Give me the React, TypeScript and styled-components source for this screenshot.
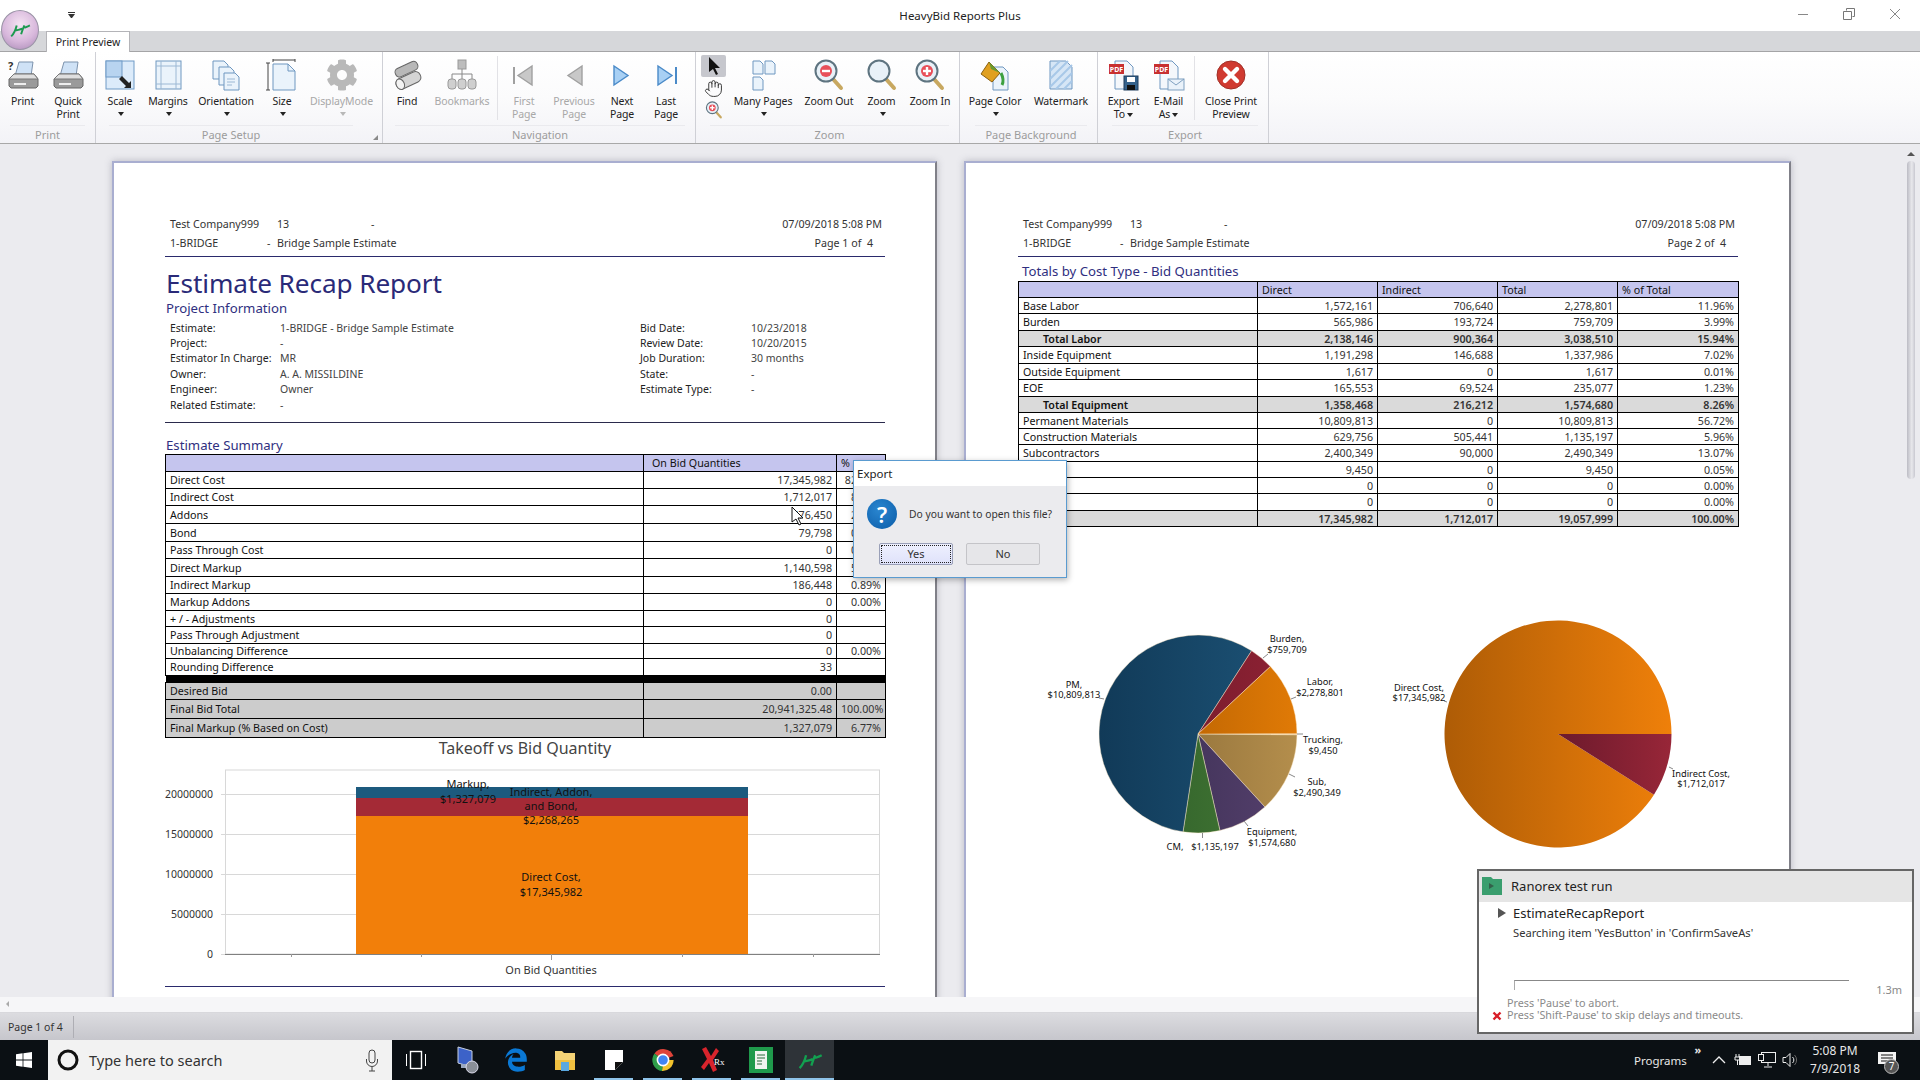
import React, { FC, ReactNode } from "react"
import styled, { createGlobalStyle } from "styled-components"
import { FaCog, FaEdgeLegacy } from "react-icons/fa"
import { Hand } from "lucide-react"

const UI_FONT = `"Noto Sans", "Open Sans", sans-serif`

const GlobalStyle = createGlobalStyle`
  html, body {
    margin: 0;
    padding: 0;
    overflow: hidden;
    background: #ebebef;
    font-family: ${UI_FONT};
  }
`

const Screen = styled.div`
  position: relative;
  width: 1920px;
  height: 1080px;
  overflow: hidden;
  display: flex;
  flex-direction: column;
  color: #222;
`

/* ---------- title bar and tab strip ---------- */

const TitleBar = styled.div`
  height: 31px;
  flex: none;
  background: #fff;
  display: flex;
  align-items: center;
  justify-content: center;
  font-size: 11.5px;
  position: relative;
`

const Orb = styled.div`
  position: absolute;
  z-index: 3;
  left: 1px;
  top: 10px;
  width: 36px;
  height: 38px;
  border-radius: 50%;
  background: radial-gradient(circle at 50% 35%, #f4e3f2 0%, #d8b8dc 55%, #a888b4 100%);
  border: 1px solid #9a93a6;
  display: flex;
  align-items: center;
  justify-content: center;
`

const QatArrow = styled.div`
  position: absolute;
  left: 68px;
  top: 12px;
  width: 7px;
  border-top: 1px solid #333;
  &::after {
    content: "";
    display: block;
    margin-top: 1px;
    border-left: 3.5px solid transparent;
    border-right: 3.5px solid transparent;
    border-top: 4px solid #333;
  }
`

const WindowButtons = styled.div`
  position: absolute;
  right: 2px;
  top: 0;
  height: 28px;
  display: flex;
  align-items: center;
`

const WindowButton = styled.div`
  width: 46px;
  display: flex;
  justify-content: center;
  color: #777;
`

const TabStrip = styled.div`
  height: 21px;
  flex: none;
  background: #d6d7da;
  border-bottom: 1px solid #a4a4a6;
  box-sizing: border-box;
  padding-left: 46px;
`

const Tab = styled.div`
  width: 84px;
  height: 21px;
  box-sizing: border-box;
  background: #fff;
  border: 1px solid #b4b4b8;
  border-bottom: none;
  font-size: 10.5px;
  line-height: 21px;
  text-align: center;
`

/* ---------- ribbon ---------- */

const Ribbon = styled.div`
  height: 92px;
  flex: none;
  display: flex;
  box-sizing: border-box;
  border-bottom: 1px solid #a8a8a8;
  background: linear-gradient(#fff 0%, #fbfbfc 50%, #f3f3f7 100%);
`

const Group = styled.div<{ $w: number; $pad?: number }>`
  width: ${(p) => p.$w}px;
  flex: none;
  box-sizing: border-box;
  padding-left: ${(p) => p.$pad || 0}px;
  border-right: 1px solid #cfd0d6;
  display: flex;
  flex-direction: column;
  position: relative;
`

const GroupBody = styled.div`
  height: 74px;
  display: flex;
`

const GroupCaption = styled.div<{ $launcher?: boolean }>`
  font-size: 11px;
  line-height: 17px;
  text-align: center;
  color: #9c9c9c;
  margin: 0 ${(p) => (p.$launcher ? 29 : 10)}px 0 10px;
  border-top: 1px solid #eaeaee;
`

const Launcher = styled.div`
  position: absolute;
  right: 4px;
  bottom: 3px;
  width: 0;
  height: 0;
  border-left: 5px solid transparent;
  border-bottom: 5px solid #8a8a8a;
`

const ToolButton = styled.div<{ $w: number; $off?: boolean }>`
  width: ${(p) => p.$w}px;
  flex: none;
  display: flex;
  flex-direction: column;
  align-items: center;
  color: ${(p) => (p.$off ? "#a8a8a8" : "#222")};
`

const IconSlot = styled.div`
  height: 43px;
  padding-top: 3px;
  box-sizing: border-box;
  display: flex;
  align-items: center;
  justify-content: center;
`

const ToolLabel = styled.div`
  font-size: 10.5px;
  line-height: 13px;
  letter-spacing: -0.1px;
  text-align: center;
  white-space: pre-line;
`

const Caret = styled.span<{ $off?: boolean }>`
  display: inline-block;
  width: 0;
  height: 0;
  margin: 0 0 1px 2px;
  border-left: 3.5px solid transparent;
  border-right: 3.5px solid transparent;
  border-top: 4px solid ${(p) => (p.$off ? "#b8b8b8" : "#222")};
`

const CaretLine = styled.div`
  height: 13px;
  display: flex;
  align-items: center;
  justify-content: center;
`

const ToolSeparator = styled.div`
  width: 1px;
  height: 64px;
  margin: 4px 2px 0;
  background: #e2e2e6;
`

const SmallColumn = styled.div`
  width: 29px;
  flex: none;
  display: flex;
  flex-direction: column;
  padding: 3px 3px 0 1px;
  box-sizing: border-box;
`

const SmallTool = styled.div<{ $on?: boolean }>`
  height: 22px;
  display: flex;
  align-items: center;
  justify-content: center;
  border-radius: 2px;
  background: ${(p) => (p.$on ? "#c6c7cd" : "transparent")};
`

/* ---------- document area ---------- */

const DocArea = styled.div`
  height: 853px;
  flex: none;
  box-sizing: border-box;
  padding: 17px 0 0 112px;
  display: flex;
  gap: 27px;
  align-items: flex-start;
  overflow: hidden;
  position: relative;
  background: #ebebef;
`

const Sheet = styled.div<{ $pad: number; $w: number }>`
  width: ${(p) => p.$w}px;
  height: 900px;
  flex: none;
  box-sizing: border-box;
  padding: 51px 0 0 ${(p) => p.$pad}px;
  background: #fff;
  border: 2px solid #a9aed0;
  border-right-color: #808088;
  box-shadow: 0 0 7px rgba(90, 90, 110, 0.35);
`

const SheetInner = styled.div`
  width: 720px;
`

const SheetHeader = styled.div<{ $inset: number }>`
  padding: 0 3px 4px ${(p) => p.$inset}px;
  border-bottom: 1px solid #2a2a6c;
  font-size: 10.7px;
  color: #333;
`

const SheetRow = styled.div`
  height: 19px;
  display: flex;
  align-items: center;
`

const SheetCell = styled.div<{ $w: number }>`
  width: ${(p) => p.$w}px;
  flex: none;
  white-space: nowrap;
`

const SheetRight = styled.div<{ $gap?: number }>`
  margin-left: auto;
  padding-right: ${(p) => p.$gap || 0}px;
  white-space: pre;
`

const ReportTitle = styled.h1`
  margin: 10px 0 0 1px;
  font-size: 26.2px;
  line-height: 33px;
  font-weight: 400;
  color: #2a2a78;
  letter-spacing: -0.1px;
`

const SectionTitle = styled.h2<{ $top?: number; $after?: number; $left?: number }>`
  margin: ${(p) => p.$top || 0}px 0 ${(p) => p.$after || 0}px ${(p) => p.$left ?? 1}px;
  font-size: 13.2px;
  line-height: 16px;
  font-weight: 400;
  color: #2f2f80;
`

const InfoGrid = styled.div`
  display: grid;
  grid-template-columns: 110px 360px 111px 1fr;
  grid-auto-rows: 15.4px;
  padding: 4px 0 0 5px;
  height: 107px;
  box-sizing: border-box;
  font-size: 10.5px;
  align-items: center;
  border-bottom: 1px solid #2a2a4c;
  color: #222;
`

const InfoValue = styled.span`
  color: #444;
  white-space: nowrap;
`

const ReportTable = styled.table`
  width: 720px;
  table-layout: fixed;
  border-collapse: collapse;
  font-size: 10.7px;
  color: #1c1c1c;
`

const HeadRow = styled.tr<{ $h: number }>`
  height: ${(p) => p.$h}px;
  background: #c5c5ee;
`

const BodyRow = styled.tr<{ $h: number; $shade?: string; $bold?: boolean }>`
  height: ${(p) => p.$h}px;
  background: ${(p) => p.$shade || "#fff"};
  font-weight: ${(p) => (p.$bold ? 600 : 400)};
`

const Cell = styled.td<{ $num?: boolean; $indent?: boolean; $lead?: number }>`
  border: 1px solid #000;
  padding: 0 ${(p) => (p.$num ? "4px" : "0")} 0 ${(p) => (p.$lead ?? (p.$indent ? 24 : 4))}px;
  text-align: ${(p) => (p.$num ? "right" : "left")};
  white-space: nowrap;
  overflow: hidden;
  line-height: 12px;
  color: ${(p) => (p.$num ? "#333" : "#111")};
`

const ThickRow = styled.tr`
  height: 7px;
  background: #000;
`

const ChartTitle = styled.div`
  height: 21px;
  line-height: 21px;
  text-align: center;
  font-size: 16px;
  color: #444;
`

const ChartSvg = styled.svg<{ $top?: number }>`
  display: block;
  overflow: visible;
  margin-top: ${(p) => p.$top || 0}px;
  font-family: ${UI_FONT};
`

const FooterRule = styled.div`
  height: 1px;
  margin-top: 5px;
  background: #2a2a6c;
`

const VScroll = styled.div`
  position: absolute;
  right: 5px;
  top: 8px;
  width: 8px;
`

const ScrollArrow = styled.div`
  width: 0;
  height: 0;
  margin: 0 0 5px 0;
  border-left: 4px solid transparent;
  border-right: 4px solid transparent;
  border-bottom: 4px solid #555;
`

const ScrollThumb = styled.div`
  height: 318px;
  border-radius: 4px;
  background: linear-gradient(90deg, #bcbcc4, #e8e8ec 60%, #c8c8d0);
`

const HScrollBand = styled.div`
  height: 16px;
  flex: none;
  box-sizing: border-box;
  padding: 4px 0 0 6px;
  background: #f6f6f8;
  border-bottom: 1px solid #d8d8dc;
`

const HArrow = styled.div`
  width: 0;
  height: 0;
  border-top: 3px solid transparent;
  border-bottom: 3px solid transparent;
  border-right: 3px solid #aaa;
`

const StatusBar = styled.div`
  height: 27px;
  flex: none;
  background: linear-gradient(#dcdce0, #c6c6cc);
  display: flex;
  align-items: center;
  font-size: 10.5px;
  color: #333;
`

const StatusPane = styled.div`
  width: 65px;
  padding-left: 8px;
  line-height: 22px;
  border-right: 1px solid #aeaeb4;
`

/* ---------- taskbar ---------- */

const TaskBar = styled.div`
  height: 40px;
  flex: none;
  background: #0b1014;
  display: flex;
  align-items: stretch;
  color: #fff;
`

const StartButton = styled.div`
  width: 48px;
  display: flex;
  align-items: center;
  justify-content: center;
`

const SearchBox = styled.div`
  width: 344px;
  box-sizing: border-box;
  background: #f2f2f2;
  display: flex;
  align-items: center;
  padding: 0 13px 0 9px;
  gap: 10px;
  color: #333;
  font-size: 14.5px;
`

const SearchText = styled.span`
  flex: 1;
`

const TaskIcon = styled.div<{ $running?: boolean; $active?: boolean; $lead?: number }>`
  width: 49px;
  flex: none;
  position: relative;
  margin-left: ${(p) => p.$lead || 0}px;
  display: flex;
  align-items: center;
  justify-content: center;
  background: ${(p) => (p.$active ? "#2e3338" : "transparent")};
  &::after {
    content: "";
    display: ${(p) => (p.$running || p.$active ? "block" : "none")};
    position: absolute;
    left: ${(p) => (p.$active ? 0 : 5)}px;
    right: ${(p) => (p.$active ? 0 : 5)}px;
    bottom: 0;
    height: 2px;
    background: #8fc4ea;
  }
`

const Tray = styled.div`
  margin-left: auto;
  display: flex;
  align-items: stretch;
  padding-right: 15px;
  font-size: 12px;
  color: #e8e8e8;
`

const TrayLabel = styled.div`
  width: 55px;
  padding-left: 5px;
  display: flex;
  align-items: center;
  font-size: 11.5px;
`

const TrayChevrons = styled.div`
  width: 18px;
  padding-top: 3px;
  font-size: 11px;
  font-weight: 700;
  line-height: 14px;
  text-align: center;
`

const TrayIcon = styled.div<{ $w?: number }>`
  width: ${(p) => p.$w || 23}px;
  display: flex;
  align-items: center;
  justify-content: center;
`

const Clock = styled.div`
  width: 68px;
  display: flex;
  flex-direction: column;
  justify-content: center;
  align-items: center;
  line-height: 18px;
`

const Notify = styled.div`
  width: 36px;
  position: relative;
  display: flex;
  align-items: center;
  justify-content: center;
`

const NotifyBadge = styled.span`
  position: absolute;
  right: 6px;
  bottom: 6px;
  width: 15px;
  height: 15px;
  border-radius: 50%;
  background: #555;
  border: 1px solid #bbb;
  box-sizing: border-box;
  font-size: 10px;
  line-height: 13px;
  text-align: center;
  color: #fff;
`

/* ---------- overlays ---------- */

const Dialog = styled.div`
  position: absolute;
  z-index: 5;
  left: 853px;
  top: 460px;
  width: 214px;
  height: 118px;
  box-sizing: border-box;
  border: 1px solid #5a9bd0;
  background: #ebebee;
  box-shadow: 1px 2px 6px rgba(0, 0, 0, 0.3);
  font-size: 10.3px;
  color: #333;
`

const DialogHead = styled.div`
  height: 25px;
  background: #fff;
  font-size: 11.5px;
  line-height: 25px;
  padding-left: 3px;
  color: #222;
`

const DialogBody = styled.div`
  display: flex;
  align-items: center;
  gap: 12px;
  padding: 13px 0 0 13px;
`

const QuestionMark = styled.div`
  width: 30px;
  height: 30px;
  flex: none;
  border-radius: 50%;
  background: radial-gradient(circle at 40% 35%, #2a86d0, #0b5ca8);
  color: #fff;
  font-size: 22px;
  font-weight: 600;
  line-height: 30px;
  text-align: center;
`

const DialogActions = styled.div`
  display: flex;
  gap: 13px;
  padding: 14px 0 0 25px;
`

const DialogButton = styled.div<{ $focus?: boolean }>`
  width: 74px;
  height: 22px;
  box-sizing: border-box;
  border: 1px solid ${(p) => (p.$focus ? "#9aa0b8" : "#c4c4c8")};
  border-radius: 2px;
  background: ${(p) => (p.$focus ? "linear-gradient(#eef0fe, #dfe2fa)" : "#e6e6e9")};
  outline: ${(p) => (p.$focus ? "1px dotted #222" : "none")};
  outline-offset: -3px;
  text-align: center;
  line-height: 20px;
  font-size: 11px;
`

const Toast = styled.div`
  position: absolute;
  z-index: 6;
  left: 1477px;
  top: 869px;
  width: 437px;
  height: 165px;
  box-sizing: border-box;
  border: 2px solid #666;
  background: #fff;
  color: #222;
`

const ToastHead = styled.div`
  height: 29px;
  padding: 0 0 2px 3px;
  background: #e5e5e5;
  display: flex;
  align-items: center;
  gap: 9px;
  font-size: 13px;
`

const ToastBody = styled.div`
  padding: 1px 0 0 19px;
`

const ToastJob = styled.div`
  display: flex;
  align-items: center;
  gap: 7px;
  font-size: 13px;
  line-height: 20px;
`

const PlayMark = styled.span`
  width: 0;
  height: 0;
  border-top: 5px solid transparent;
  border-bottom: 5px solid transparent;
  border-left: 8px solid #555;
`

const ToastStep = styled.div`
  font-size: 11.2px;
  line-height: 20px;
  padding-left: 15px;
  color: #333;
`

const ToastProgress = styled.div`
  display: flex;
  align-items: flex-start;
  margin-top: 37px;
  padding: 0 10px 0 35px;
  color: #888;
  font-size: 11px;
`

const ProgressTrack = styled.div`
  width: 334px;
  height: 9px;
  border-top: 1px solid #888;
  border-left: 1px solid #aaa;
`

const ProgressTime = styled.span`
  margin: 0 0 0 auto;
  line-height: 12px;
  padding-top: 4px;
`

const ToastHint = styled.div`
  display: flex;
  align-items: flex-end;
  gap: 5px;
  margin-top: 1px;
  padding-left: 13px;
  font-size: 10.8px;
  line-height: 12px;
  color: #8a8a8a;
`

const MouseCursor = styled.svg`
  position: absolute;
  z-index: 4;
  left: 791px;
  top: 506px;
`

/* ---------- icons ---------- */

const Svg: FC<{ w?: number; h?: number; children: ReactNode }> = ({ w = 32, h = 32, children }) => (
  <svg width={w} height={h} viewBox={`0 0 ${w} ${h}`}>{children}</svg>
)

const PAGE = "#eaf3fb"
const EDGE = "#6f97c0"

const PrinterIcon: FC<{ help?: boolean }> = ({ help }) => (
  <Svg>
    <polygon points="12,3 26,3 24,17 8,17" fill="#cfe2f6" stroke="#7d93ad" />
    <path d="M7 15h20l4 5v7l-2 2H4l-2-2v-7z" fill="#9a9a9a" stroke="#666" />
    <path d="M7 15h20l4 5H2z" fill="#dfdfdf" stroke="#777" />
    <rect x="7" y="24" width="12" height="2" fill="#eee" />
    {help && <text x="1" y="11" fontSize="11" fontWeight="700" fill="#333">?</text>}
  </Svg>
)

const ScaleIcon = () => (
  <Svg>
    <rect x="2" y="2" width="28" height="28" fill="#dcebfa" stroke="#6f9ac6" />
    <rect x="2" y="2" width="16" height="16" fill="#b8d4f0" stroke="#6f9ac6" />
    <path d="M18 17l7 7 2-2v7h-7l2-2-7-7z" fill="#222" />
  </Svg>
)

const MarginsIcon = () => (
  <Svg>
    <rect x="4" y="2" width="25" height="28" fill={PAGE} stroke={EDGE} />
    <path d="M9 2v28M24 2v28M4 7h25M4 25h25" stroke="#9cb8d4" fill="none" />
  </Svg>
)

const OrientationIcon = () => (
  <Svg>
    <path d="M3 2h11l4 4v14H3z" fill={PAGE} stroke={EDGE} />
    <path d="M9 8h11l4 4v14H9z" fill={PAGE} stroke={EDGE} />
    <path d="M14 14h11l4 4v13H14z" fill={PAGE} stroke={EDGE} />
    <path d="M17 20h8M17 23h8M17 26h5" stroke="#9cb8d4" />
  </Svg>
)

const SizeIcon = () => (
  <Svg>
    <path d="M7 1h22M7 0v3M29 0v3M2 4v27M0 4h4M0 31h4" stroke="#444" fill="none" />
    <path d="M7 5h15l7 7v19H7z" fill={PAGE} stroke={EDGE} />
    <path d="M22 5v7h7" fill="none" stroke={EDGE} />
  </Svg>
)

const BinocularIcon = () => (
  <Svg h={30}>
    <g transform="rotate(-25 16 15)">
      <rect x="6" y="5" width="24" height="9" rx="4" fill="#b8b8b8" stroke="#666" />
      <rect x="2" y="15" width="26" height="11" rx="5" fill="#d4d4d4" stroke="#666" />
      <ellipse cx="6" cy="20.5" rx="4" ry="5.5" fill="#f3f3f3" stroke="#666" />
    </g>
  </Svg>
)

const BookmarksIcon = () => (
  <Svg>
    <rect x="12" y="1" width="8" height="9" fill="#bdbdbd" stroke="#999" />
    <path d="M16 10v5M6 20v-5h20v5M16 15v5" stroke="#888" fill="none" />
    {[2, 12, 22].map((x) => <rect key={x} x={x} y="20" width="8" height="10" rx="3" fill="#cfcfcf" stroke="#999" />)}
  </Svg>
)

const NavIcon: FC<{ dir: "first" | "prev" | "next" | "last" }> = ({ dir }) => {
  const back = dir === "first" || dir === "prev"
  const tri = back ? "M24 7v19L10 16.5z" : "M8 7v19l14-9.5z"
  const fill = back ? "#c8c8c8" : "#a8d0f4"
  const line = back ? "#a0a0a0" : "#4a8ac8"
  return (
    <Svg>
      <path d={tri} fill={fill} stroke={line} strokeWidth="1.4" />
      {dir === "first" && <path d="M6 8v17" stroke={line} strokeWidth="2" />}
      {dir === "last" && <path d="M26 8v17" stroke={line} strokeWidth="2" />}
    </Svg>
  )
}

const ManyPagesIcon = () => (
  <Svg>
    {[[6, 2], [18, 2], [6, 18]].map(([x, y]) => (
      <path key={`${x}${y}`} d={`M${x} ${y}h7l3 3v10h-10z`} fill={PAGE} stroke={EDGE} />
    ))}
  </Svg>
)

const LensIcon: FC<{ mark?: "in" | "out"; size?: number }> = ({ mark, size = 32 }) => (
  <svg width={size} height={size} viewBox="0 0 32 32">
    <path d="M20 20l8 9" stroke="#c8a860" strokeWidth="4" strokeLinecap="round" />
    <circle cx="13" cy="12" r="10.5" fill="#e8f1f8" stroke="#5e7480" strokeWidth="2" />
    {mark && <circle cx="13" cy="12" r="6" fill="#e8505a" />}
    {mark && <path d="M9 12h8" stroke="#fff" strokeWidth="2.4" />}
    {mark === "in" && <path d="M13 8v8" stroke="#fff" strokeWidth="2.4" />}
  </svg>
)

const PageColorIcon = () => (
  <Svg>
    <path d="M14 8h10l5 5v18H14z" fill={PAGE} stroke={EDGE} />
    <path d="M10 3l11 11-8 9L2 15z" fill="#e0a020" stroke="#8a6010" />
    <path d="M10 3l11 11L12 10z" fill="#6a9a30" />
    <path d="M22 14c2 4 3 8 1 12" stroke="#3ca040" strokeWidth="3" fill="none" />
  </Svg>
)

const WatermarkIcon = () => (
  <Svg>
    <path d="M5 2h16l6 6v22H5z" fill="#d6e6f6" stroke={EDGE} />
    <path d="M5 12L15 2M5 20L23 2M5 28L27 6M11 30L27 14M19 30l8-8" stroke="#a8c8e8" strokeWidth="2" />
  </Svg>
)

const PdfPage: FC = () => (
  <>
    <path d="M7 2h12l6 6v22H7z" fill="#f4f7fb" stroke={EDGE} />
    <rect x="1" y="5" width="15" height="10" fill="#c83030" />
    <text x="8.5" y="13" fontSize="7" fontWeight="700" fill="#fff" textAnchor="middle" fontFamily={UI_FONT}>PDF</text>
  </>
)

const ExportIcon = () => (
  <Svg>
    <PdfPage />
    <rect x="16" y="17" width="14" height="14" fill="#35628c" stroke="#1e3c5c" />
    <rect x="19" y="18" width="8" height="5" fill="#fff" />
    <rect x="19" y="26" width="8" height="5" fill="#111" />
  </Svg>
)

const MailIcon = () => (
  <Svg>
    <PdfPage />
    <rect x="15" y="20" width="16" height="11" fill="#eaf2fa" stroke="#7fa0c0" />
    <path d="M15 20l8 6 8-6" stroke="#7fa0c0" fill="none" />
  </Svg>
)

const CloseIcon = () => (
  <Svg>
    <circle cx="16" cy="16" r="14" fill="#d03a30" stroke="#a03028" />
    <path d="M10 10l12 12M22 10L10 22" stroke="#fff" strokeWidth="4.4" strokeLinecap="round" />
  </Svg>
)

const ArrowTool = () => (
  <svg width="14" height="20" viewBox="0 0 14 20">
    <path d="M2 1v15l4-3 3 6 2-1-3-6h5z" fill="#111" />
  </svg>
)

const HeavyMark: FC<{ size: number; color: string }> = ({ size, color }) => (
  <svg width={size} height={size * 0.8} viewBox="0 0 20 16">
    <path d="M2 14c3-3 4-6 5-10M5 9c3-1 5-1 7-2M11 12c1-3 2-6 3-8M14 6c1 0 3-1 5-2" stroke={color} strokeWidth="1.8" fill="none" />
  </svg>
)

/* ---------- data ---------- */

interface ITool {
  label: string,
  w: number,
  icon: ReactNode,
  off?: boolean,
  drop?: boolean,
  inlineDrop?: boolean,
}

interface IGroup {
  title: string,
  w: number,
  pad?: number,
  launcher?: boolean,
  tools: (ITool | "sep" | "small")[],
}

const GROUPS: IGroup[] = [
  { title: "Print", w: 96, tools: [
    { label: "Print", w: 45, icon: <PrinterIcon help /> },
    { label: "Quick\nPrint", w: 46, icon: <PrinterIcon /> },
  ] },
  { title: "Page Setup", w: 287, pad: 3, launcher: true, tools: [
    { label: "Scale", w: 42, icon: <ScaleIcon />, drop: true },
    { label: "Margins", w: 54, icon: <MarginsIcon />, drop: true },
    { label: "Orientation", w: 62, icon: <OrientationIcon />, drop: true },
    { label: "Size", w: 50, icon: <SizeIcon />, drop: true },
    { label: "DisplayMode", w: 69, off: true, drop: true, icon: <FaCog size={32} color="#b9b9b9" /> },
  ] },
  { title: "Navigation", w: 313, pad: 2, tools: [
    { label: "Find", w: 44, icon: <BinocularIcon /> },
    { label: "Bookmarks", w: 66, off: true, icon: <BookmarksIcon /> },
    "sep",
    { label: "First\nPage", w: 48, off: true, icon: <NavIcon dir="first" /> },
    { label: "Previous\nPage", w: 52, off: true, icon: <NavIcon dir="prev" /> },
    { label: "Next\nPage", w: 44, icon: <NavIcon dir="next" /> },
    { label: "Last\nPage", w: 44, icon: <NavIcon dir="last" /> },
  ] },
  { title: "Zoom", w: 264, pad: 4, tools: [
    "small",
    { label: "Many Pages", w: 68, drop: true, icon: <ManyPagesIcon /> },
    { label: "Zoom Out", w: 64, icon: <LensIcon mark="out" /> },
    { label: "Zoom", w: 41, drop: true, icon: <LensIcon /> },
    { label: "Zoom In", w: 56, icon: <LensIcon mark="in" /> },
  ] },
  { title: "Page Background", w: 138, pad: 5, tools: [
    { label: "Page Color", w: 60, drop: true, icon: <PageColorIcon /> },
    { label: "Watermark", w: 72, icon: <WatermarkIcon /> },
  ] },
  { title: "Export", w: 171, pad: 4, tools: [
    { label: "Export\nTo", w: 43, inlineDrop: true, icon: <ExportIcon /> },
    { label: "E-Mail\nAs", w: 47, inlineDrop: true, icon: <MailIcon /> },
    "sep",
    { label: "Close Print\nPreview", w: 68, icon: <CloseIcon /> },
  ] },
]

const INFO: [string, string, string, string][] = [
  ["Estimate:", "1-BRIDGE - Bridge Sample Estimate", "Bid Date:", "10/23/2018"],
  ["Project:", "-", "Review Date:", "10/20/2015"],
  ["Estimator In Charge:", "MR", "Job Duration:", "30 months"],
  ["Owner:", "A. A. MISSILDINE", "State:", "-"],
  ["Engineer:", "Owner", "Estimate Type:", "-"],
  ["Related Estimate:", "-", "", ""],
]

const SUMMARY: [string, string, string, number][] = [
  ["Direct Cost", "17,345,982", "82.83%", 17],
  ["Indirect Cost", "1,712,017", "8.18%", 17],
  ["Addons", "476,450", "2.28%", 18],
  ["Bond", "79,798", "0.38%", 18],
  ["Pass Through Cost", "0", "0.00%", 17],
  ["Direct Markup", "1,140,598", "5.45%", 18],
  ["Indirect Markup", "186,448", "0.89%", 17],
  ["Markup Addons", "0", "0.00%", 17],
  ["+ / - Adjustments", "0", "", 16],
  ["Pass Through Adjustment", "0", "", 17],
  ["Unbalancing Difference", "0", "0.00%", 15],
  ["Rounding Difference", "33", "", 17],
]

const SUMMARY_TOTALS: [string, string, string, number][] = [
  ["Desired Bid", "0.00", "", 17],
  ["Final Bid Total", "20,941,325.48", "100.00%", 19],
  ["Final Markup (% Based on Cost)", "1,327,079", "6.77%", 19],
]

const COST_ROWS: { name: string, vals: string[], total?: boolean, h: number }[] = [
  { name: "Base Labor", vals: ["1,572,161", "706,640", "2,278,801", "11.96%"], h: 16 },
  { name: "Burden", vals: ["565,986", "193,724", "759,709", "3.99%"], h: 17 },
  { name: "Total Labor", vals: ["2,138,146", "900,364", "3,038,510", "15.94%"], total: true, h: 16 },
  { name: "Inside Equipment", vals: ["1,191,298", "146,688", "1,337,986", "7.02%"], h: 17 },
  { name: "Outside Equipment", vals: ["1,617", "0", "1,617", "0.01%"], h: 16 },
  { name: "EOE", vals: ["165,553", "69,524", "235,077", "1.23%"], h: 17 },
  { name: "Total Equipment", vals: ["1,358,468", "216,212", "1,574,680", "8.26%"], total: true, h: 16 },
  { name: "Permanent Materials", vals: ["10,809,813", "0", "10,809,813", "56.72%"], h: 16 },
  { name: "Construction Materials", vals: ["629,756", "505,441", "1,135,197", "5.96%"], h: 16 },
  { name: "Subcontractors", vals: ["2,400,349", "90,000", "2,490,349", "13.07%"], h: 17 },
  { name: "Trucking", vals: ["9,450", "0", "9,450", "0.05%"], h: 16 },
  { name: "", vals: ["0", "0", "0", "0.00%"], h: 16 },
  { name: "", vals: ["0", "0", "0", "0.00%"], h: 17 },
  { name: "Totals", vals: ["17,345,982", "1,712,017", "19,057,999", "100.00%"], total: true, h: 16 },
]

/* ---------- report parts ---------- */

const ReportHeader: FC<{ page: number; inset: number }> = ({ page, inset }) => (
  <SheetHeader $inset={inset}>
    <SheetRow>
      <SheetCell $w={107}>Test Company999</SheetCell>
      <SheetCell $w={94}>13</SheetCell>
      <SheetCell $w={10}>-</SheetCell>
      <SheetRight>07/09/2018 5:08 PM</SheetRight>
    </SheetRow>
    <SheetRow>
      <SheetCell $w={97}>1-BRIDGE</SheetCell>
      <SheetCell $w={10}>-</SheetCell>
      <SheetCell $w={150}>Bridge Sample Estimate</SheetCell>
      <SheetRight $gap={9}>{`Page ${page} of  4`}</SheetRight>
    </SheetRow>
  </SheetHeader>
)

const BAR_TICKS = [0, 5000000, 10000000, 15000000, 20000000]

const BarChart = () => (
  <ChartSvg width="720" height="222" viewBox="0 0 720 222">
    <rect x="60.5" y="11" width="654" height="184" fill="#fff" stroke="#d8d8d8" />
    {BAR_TICKS.map((t, i) => {
      const y = 195 - i * 40
      return (
        <g key={t}>
          <path d={`M56 ${y}.5H714`} stroke="#d8d8d8" />
          <text x="48" y={y + 4} fontSize="10.5" fill="#333" textAnchor="end">{t}</text>
        </g>
      )
    })}
    <rect x="191" y="28" width="392" height="11" fill="#1c5a7e" />
    <rect x="191" y="39" width="392" height="18" fill="#a42a36" />
    <rect x="191" y="57" width="392" height="138" fill="#f27f0a" />
    <path d="M60 195.5H715" stroke="#808080" />
    {[126, 256, 386, 517, 648].map((x) => <path key={x} d={`M${x}.5 195v${x === 386 ? 6 : 3}`} stroke="#999" />)}
    <g fontSize="11" textAnchor="middle" fill="#111">
      <text x="303" y="29">Markup,</text>
      <text x="303" y="44">$1,327,079</text>
      <text x="386" y="37">Indirect, Addon,</text>
      <text x="386" y="51">and Bond,</text>
      <text x="386" y="65">$2,268,265</text>
      <text x="386" y="122">Direct Cost,</text>
      <text x="386" y="137">$17,345,982</text>
      <text x="386" y="215" fill="#333">On Bid Quantities</text>
    </g>
  </ChartSvg>
)

const polar = (cx: number, cy: number, r: number, deg: number) => {
  const a = (deg * Math.PI) / 180
  return [cx + r * Math.cos(a), cy + r * Math.sin(a)]
}

const slicePath = (cx: number, cy: number, r: number, from: number, to: number) => {
  const [x1, y1] = polar(cx, cy, r, from)
  const [x2, y2] = polar(cx, cy, r, to)
  return `M${cx} ${cy}L${x1} ${y1}A${r} ${r} 0 ${to - from > 180 ? 1 : 0} 1 ${x2} ${y2}Z`
}

const PIE_A = [
  { id: "tr", from: -0.2, to: 0.5, a: "#d09a50", b: "#e0b060" },
  { id: "su", from: 0.5, to: 47.5, a: "#826432", b: "#b48e4c" },
  { id: "eq", from: 47.5, to: 77.2, a: "#352c4c", b: "#56406e" },
  { id: "cm", from: 77.2, to: 98.7, a: "#2c5a28", b: "#467c36" },
  { id: "pm", from: 98.7, to: 302.8, a: "#113a58", b: "#1d5478" },
  { id: "bu", from: 302.8, to: 317, a: "#6a1828", b: "#8f2234" },
  { id: "la", from: 317, to: 359.8, a: "#a85800", b: "#e07a06" },
]

const PIE_B = [
  { id: "di", from: 32.3, to: 360, a: "#ae5c06", b: "#ef800a" },
  { id: "in", from: 0, to: 32.3, a: "#6c1a2c", b: "#982638" },
]

const LABELS: [number, number, string][] = [
  [269, 31, "Burden,"], [269, 42, "$759,709"],
  [302, 74, "Labor,"], [302, 85, "$2,278,801"],
  [56, 77, "PM,"], [56, 87, "$10,809,813"],
  [305, 132, "Trucking,"], [305, 143, "$9,450"],
  [299, 174, "Sub,"], [299, 185, "$2,490,349"],
  [254, 224, "Equipment,"], [254, 235, "$1,574,680"],
  [157, 239, "CM,"], [197, 239, "$1,135,197"],
  [401, 80, "Direct Cost,"], [401, 90, "$17,345,982"],
  [683, 166, "Indirect Cost,"], [683, 176, "$1,712,017"],
]

const LEADERS = [
  "M245 47l5-4", "M273 88l5-2", "M86 88l-5-1", "M279 123h6", "M271 163l6 3",
  "M226 210l4 5", "M184.5 222v5", "M426 90l3 1", "M651 156l4 2",
]

const PieCharts = () => (
  <ChartSvg width="720" height="250" viewBox="0 0 720 250" $top={84}>
    <defs>
      {PIE_A.map((s) => (
        <linearGradient key={s.id} id={s.id} gradientUnits="userSpaceOnUse" x1="81" x2="279" y1="0" y2="0">
          <stop offset="0" stopColor={s.a} />
          <stop offset="1" stopColor={s.b} />
        </linearGradient>
      ))}
      {PIE_B.map((s) => (
        <linearGradient key={s.id} id={s.id} gradientUnits="userSpaceOnUse" x1={s.id === "in" ? 540 : 427} x2="654" y1="0" y2="0">
          <stop offset="0" stopColor={s.a} />
          <stop offset="1" stopColor={s.b} />
        </linearGradient>
      ))}
    </defs>
    {PIE_A.map((s) => <path key={s.id} d={slicePath(180, 123, 99, s.from, s.to)} fill={`url(#${s.id})`} stroke="rgba(255,235,200,.55)" strokeWidth="0.8" />)}
    {PIE_B.map((s) => <path key={s.id} d={slicePath(540, 123, 113.5, s.from, s.to)} fill={`url(#${s.id})`} />)}
    {LEADERS.map((d) => <path key={d} d={d} stroke="#888" fill="none" />)}
    <g fontSize="9.3" textAnchor="middle" fill="#111">
      {LABELS.map(([x, y, t]) => <text key={t} x={x} y={y}>{t}</text>)}
    </g>
  </ChartSvg>
)

/* ---------- page ---------- */

const Tool: FC<{ tool: ITool }> = ({ tool }) => {
  const lines = tool.label.split("\n")
  return (
    <ToolButton $w={tool.w} $off={tool.off}>
      <IconSlot>{tool.icon}</IconSlot>
      {tool.inlineDrop ? (
        <ToolLabel>{lines[0]}{"\n"}{lines[1]}<Caret /></ToolLabel>
      ) : (
        <ToolLabel>{tool.label}</ToolLabel>
      )}
      {tool.drop && <CaretLine><Caret $off={tool.off} /></CaretLine>}
    </ToolButton>
  )
}

const App: FC = () => (
  <Screen>
    <GlobalStyle />
    <TitleBar>
      HeavyBid Reports Plus
      <QatArrow />
      <WindowButtons>
        <WindowButton>
          <svg width="12" height="12"><path d="M1 6.5h10" stroke="#888" /></svg>
        </WindowButton>
        <WindowButton>
          <svg width="12" height="12"><path d="M3.5 2.5V.5h8v8h-2M.5 3.5h8v8h-8z" stroke="#777" fill="none" /></svg>
        </WindowButton>
        <WindowButton>
          <svg width="12" height="12"><path d="M1 1l10 10M11 1L1 11" stroke="#888" /></svg>
        </WindowButton>
      </WindowButtons>
    </TitleBar>
    <Orb><HeavyMark size={22} color="#1e9a50" /></Orb>
    <TabStrip><Tab>Print Preview</Tab></TabStrip>

    <Ribbon>
      {GROUPS.map((g) => (
        <Group key={g.title} $w={g.w} $pad={g.pad}>
          <GroupBody>
            {g.tools.map((t, i) => {
              if (t === "sep") return <ToolSeparator key={i} />
              if (t === "small") {
                return (
                  <SmallColumn key={i}>
                    <SmallTool $on><ArrowTool /></SmallTool>
                    <SmallTool><Hand size={19} strokeWidth={1.2} color="#333" /></SmallTool>
                    <SmallTool><LensIcon size={18} mark="in" /></SmallTool>
                  </SmallColumn>
                )
              }
              return <Tool key={t.label} tool={t} />
            })}
          </GroupBody>
          <GroupCaption $launcher={g.launcher}>{g.title}</GroupCaption>
          {g.launcher && <Launcher />}
        </Group>
      ))}
    </Ribbon>

    <DocArea>
      <Sheet $pad={51} $w={825}>
        <SheetInner>
          <ReportHeader page={1} inset={5} />
          <ReportTitle>Estimate Recap Report</ReportTitle>
          <SectionTitle>Project Information</SectionTitle>
          <InfoGrid>
            {INFO.map((r) => (
              <React.Fragment key={r[0]}>
                <span>{r[0]}</span>
                <InfoValue>{r[1]}</InfoValue>
                <span>{r[2]}</span>
                <InfoValue>{r[3]}</InfoValue>
              </React.Fragment>
            ))}
          </InfoGrid>
          <SectionTitle $top={14} $after={1}>Estimate Summary</SectionTitle>
          <ReportTable>
            <colgroup>
              <col width="478" /><col width="193" /><col width="49" />
            </colgroup>
            <tbody>
              <HeadRow $h={17}>
                <Cell />
                <Cell $lead={8}>On Bid Quantities</Cell>
                <Cell>%</Cell>
              </HeadRow>
              {SUMMARY.map(([n, v, p, h]) => (
                <BodyRow key={n} $h={h}>
                  <Cell>{n}</Cell><Cell $num>{v}</Cell><Cell $num>{p}</Cell>
                </BodyRow>
              ))}
              <ThickRow><td colSpan={3} /></ThickRow>
              {SUMMARY_TOTALS.map(([n, v, p, h]) => (
                <BodyRow key={n} $h={h} $shade="#cccccc">
                  <Cell>{n}</Cell><Cell $num>{v}</Cell><Cell $num>{p}</Cell>
                </BodyRow>
              ))}
            </tbody>
          </ReportTable>
          <ChartTitle>Takeoff vs Bid Quantity</ChartTitle>
          <BarChart />
          <FooterRule />
        </SheetInner>
      </Sheet>

      <Sheet $pad={52} $w={827}>
        <SheetInner>
          <ReportHeader page={2} inset={5} />
          <SectionTitle $top={6} $after={2} $left={4}>Totals by Cost Type - Bid Quantities</SectionTitle>
          <ReportTable>
            <colgroup>
              <col width="239" /><col width="120" /><col width="120" /><col width="120" /><col width="121" />
            </colgroup>
            <tbody>
              <HeadRow $h={16}>
                <Cell />
                <Cell>Direct</Cell>
                <Cell>Indirect</Cell>
                <Cell>Total</Cell>
                <Cell>% of Total</Cell>
              </HeadRow>
              {COST_ROWS.map((r, i) => (
                <BodyRow key={i} $h={r.h} $shade={r.total ? "#dadada" : undefined} $bold={r.total}>
                  <Cell $indent={r.total && r.name !== "Totals"}>{r.name}</Cell>
                  {r.vals.map((v, j) => <Cell key={j} $num>{v}</Cell>)}
                </BodyRow>
              ))}
            </tbody>
          </ReportTable>
          <PieCharts />
        </SheetInner>
      </Sheet>

      <VScroll>
        <ScrollArrow />
        <ScrollThumb />
      </VScroll>
    </DocArea>

    <HScrollBand><HArrow /></HScrollBand>
    <StatusBar><StatusPane>Page 1 of 4</StatusPane></StatusBar>

    <TaskBar>
      <StartButton>
        <svg width="16" height="16" viewBox="0 0 16 16" fill="#fff">
          <path d="M0 2.2l6.6-.9v6.3H0zM7.4 1.2L16 0v7.6H7.4zM0 8.4h6.6v6.3L0 13.8zM7.4 8.4H16V16l-8.6-1.2z" />
        </svg>
      </StartButton>
      <SearchBox>
        <svg width="22" height="22"><circle cx="11" cy="11" r="9" fill="none" stroke="#111" strokeWidth="3" /></svg>
        <SearchText>Type here to search</SearchText>
        <svg width="14" height="24" viewBox="0 0 14 24" fill="none" stroke="#444">
          <rect x="4" y="2" width="6" height="13" rx="3" />
          <path d="M1.5 11v2a5.5 5.5 0 0 0 11 0v-2M7 19v4M4 23h6" />
        </svg>
      </SearchBox>
      <TaskIcon $lead={-1}>
        <svg width="22" height="20" fill="none" stroke="#fff"><rect x="5.5" y="1.5" width="11" height="17" strokeWidth="1.4" /><path d="M1.5 4v12M20.5 4v12" /></svg>
      </TaskIcon>
      <TaskIcon $lead={2}>
        <svg width="24" height="28" viewBox="0 0 24 28">
          <path d="M3 1l14 4v16L3 17z" fill="#3c62c8" stroke="#c8d0e0" />
          <rect x="6" y="18" width="12" height="4" fill="#9aa8c0" />
          <circle cx="17" cy="21" r="6" fill="#8a8f98" stroke="#dde" />
        </svg>
      </TaskIcon>
      <TaskIcon><FaEdgeLegacy size={24} color="#0a78d4" /></TaskIcon>
      <TaskIcon>
        <svg width="22" height="24" viewBox="0 0 22 24">
          <path d="M1 3h7l2 2h11v17H1z" fill="#f5d376" />
          <rect x="1" y="12" width="20" height="10" fill="#f0c040" />
          <rect x="7" y="14" width="8" height="9" fill="#5aa8e0" />
        </svg>
      </TaskIcon>
      <TaskIcon $running>
        <svg width="20" height="22" viewBox="0 0 20 22">
          <path d="M1 1h18v12l-8 8H1z" fill="#fff" />
          <path d="M11 21v-8h8z" fill="#111" />
        </svg>
      </TaskIcon>
      <TaskIcon $running>
        <svg width="24" height="24" viewBox="0 0 24 24">
          <path d="M12 12L3.5 5.5A11 11 0 0 1 22.5 8z" fill="#e0443a" />
          <path d="M12 12h10.6A11 11 0 0 1 11 23z" fill="#f3c32c" />
          <path d="M12 12L11 23A11 11 0 0 1 3.5 5.5z" fill="#2f9e4a" />
          <circle cx="12" cy="12" r="5.6" fill="#4285f4" stroke="#fff" strokeWidth="1.6" />
        </svg>
      </TaskIcon>
      <TaskIcon $running>
        <svg width="30" height="28" viewBox="0 0 30 28">
          <path d="M5 3l4-2 5 9 5-8 3 3-6 9 4 10-4 2-4-9-5 7-3-3 6-8z" fill="#d8242c" />
          <text x="17" y="19" fontSize="9" fill="#fff" fontFamily="Liberation Serif, serif">Rx</text>
        </svg>
      </TaskIcon>
      <TaskIcon $running>
        <svg width="24" height="26" viewBox="0 0 24 26">
          <rect width="24" height="26" fill="#1f9a4c" />
          <rect x="6" y="4" width="12" height="18" fill="#f0f4f0" />
          <path d="M8 8h8M8 11h8M8 14h5M8 17h5" stroke="#2a6a3c" />
        </svg>
      </TaskIcon>
      <TaskIcon $active><HeavyMark size={26} color="#12a050" /></TaskIcon>
      <Tray>
        <TrayLabel>Programs</TrayLabel>
        <TrayChevrons>»</TrayChevrons>
        <TrayIcon>
          <svg width="14" height="8" fill="none" stroke="#eee" strokeWidth="1.3"><path d="M1 7l6-6 6 6" /></svg>
        </TrayIcon>
        <TrayIcon $w={25}>
          <svg width="18" height="14" viewBox="0 0 18 14" fill="none" stroke="#eee">
            <rect x="5.5" y="3.5" width="11" height="8" fill="#eee" />
            <path d="M2 1v3M5 1v3M1 4h5v3H1zM3.5 7v5" />
          </svg>
        </TrayIcon>
        <TrayIcon>
          <svg width="18" height="16" viewBox="0 0 18 16" fill="none" stroke="#eee">
            <rect x="3.5" y="0.5" width="14" height="10" />
            <rect x="0.5" y="2.5" width="5" height="6" fill="#0b1014" />
            <path d="M10 11v3M6 15h8" />
          </svg>
        </TrayIcon>
        <TrayIcon>
          <svg width="16" height="16" viewBox="0 0 16 16" fill="none" stroke="#eee">
            <path d="M1 5.5h3l4-4v13l-4-4H1z" />
            <path d="M10.5 5a4 4 0 0 1 0 6" />
            <path d="M12.5 3a7 7 0 0 1 0 10" stroke="#666" />
          </svg>
        </TrayIcon>
        <Clock>
          <span>5:08 PM</span>
          <span>7/9/2018</span>
        </Clock>
        <Notify>
          <svg width="18" height="16" viewBox="0 0 18 16" fill="#f4f4f4">
            <path d="M0 0h18v12h-7l-3 4v-4H0z" />
            <path d="M3 3h12M3 6h12M3 9h8" stroke="#111" />
          </svg>
          <NotifyBadge>7</NotifyBadge>
        </Notify>
      </Tray>
    </TaskBar>

    <MouseCursor width="14" height="20" viewBox="0 0 14 20">
      <path d="M1 1v15l4-3 3 6 2-1-3-6h5z" fill="#fff" stroke="#111" />
    </MouseCursor>

    <Dialog>
      <DialogHead>Export</DialogHead>
      <DialogBody>
        <QuestionMark>?</QuestionMark>
        <span>Do you want to open this file?</span>
      </DialogBody>
      <DialogActions>
        <DialogButton $focus>Yes</DialogButton>
        <DialogButton>No</DialogButton>
      </DialogActions>
    </Dialog>

    <Toast>
      <ToastHead>
        <svg width="20" height="18" viewBox="0 0 20 18">
          <path d="M0 0h9l2 2h9v16H0z" fill="#3a9e6e" />
          <path d="M7 6v6l5-3z" fill="#33604a" />
        </svg>
        Ranorex test run
      </ToastHead>
      <ToastBody>
        <ToastJob><PlayMark />EstimateRecapReport</ToastJob>
        <ToastStep>Searching item 'YesButton' in 'ConfirmSaveAs'</ToastStep>
      </ToastBody>
      <ToastProgress>
        <ProgressTrack />
        <ProgressTime>1.3m</ProgressTime>
      </ToastProgress>
      <ToastHint>
        <svg width="10" height="10"><path d="M1.5 1.5l7 7M8.5 1.5l-7 7" stroke="#d81e28" strokeWidth="2.4" /></svg>
        <span>Press 'Pause' to abort.<br />Press 'Shift-Pause' to skip delays and timeouts.</span>
      </ToastHint>
    </Toast>
  </Screen>
)

export default App
